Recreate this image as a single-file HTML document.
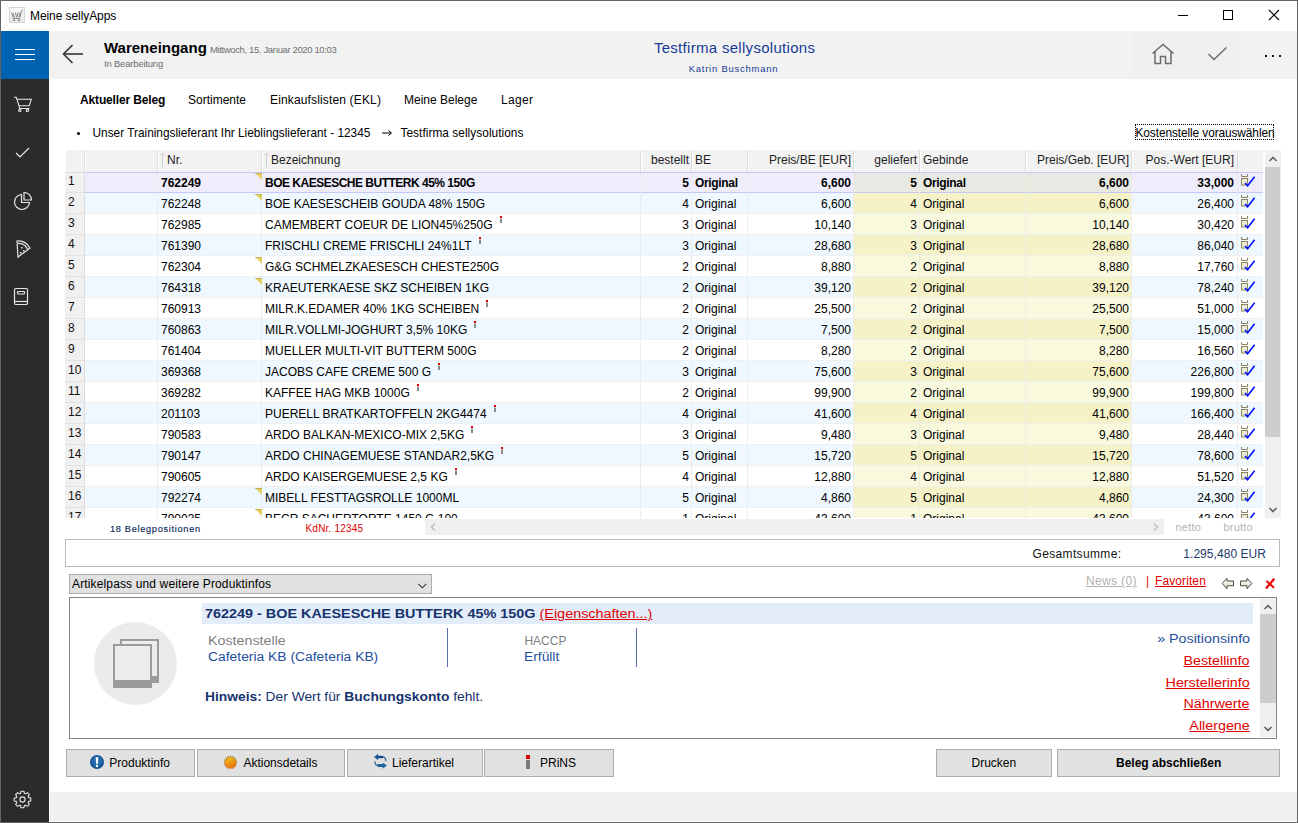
<!DOCTYPE html><html><head><meta charset="utf-8"><style>
html,body{margin:0;padding:0;width:1298px;height:823px;overflow:hidden;background:#fff;}
body{position:relative;font-family:"Liberation Sans", sans-serif;}
.a{position:absolute;}
.t{white-space:nowrap;}
</style></head><body>
<div class="a" style="left:9px;top:7px;width:16px;height:16px;background:linear-gradient(#fafafa,#e6e6e6);box-shadow:inset 0 0 0 1px #d4d4d4;"></div>
<svg class="a" style="left:9px;top:7px" width="16" height="16" viewBox="0 0 16 16"><g fill="none" stroke="#8a8a8a" stroke-width="1">
<path d="M2.5 5.5 L4.5 11.5 L10.5 11.5 L12.5 4 L14 2.5"/><path d="M4 6 L5.5 10.5 M6.5 5.5 L7.5 10 M9 5.5 L8 10.5 M11 5.5 L10 10"/>
<path d="M4 13.5 h2 M9 13.5 h2 M5 12 v2 M10 12 v2"/></g></svg>
<div class="a t" style="top:8.84px;font-size:12px;line-height:14px;color:#000;letter-spacing:-0.08px;left:30px;">Meine sellyApps</div>
<div class="a" style="left:1178px;top:15px;width:10px;height:1px;background:#000"></div>
<div class="a" style="left:1223px;top:10px;width:10px;height:10px;box-shadow:inset 0 0 0 1px #000"></div>
<svg class="a" style="left:1268px;top:9px" width="12" height="12" viewBox="0 0 12 12"><path d="M1 1 L11 11 M11 1 L1 11" stroke="#000" stroke-width="1.1"/></svg>
<div class="a" style="left:1px;top:31px;width:48px;height:791px;background:#2b2b2b;"></div>
<div class="a" style="left:1px;top:31px;width:48px;height:48px;background:#0063b1;"></div>
<div class="a" style="left:15px;top:49px;width:20px;height:1px;background:#fff"></div>
<div class="a" style="left:15px;top:54px;width:20px;height:1px;background:#fff"></div>
<div class="a" style="left:15px;top:59px;width:20px;height:1px;background:#fff"></div>
<div class="a" style="left:50px;top:31px;width:1247px;height:48px;background:#f2f2f2;"></div>
<div class="a" style="left:1132px;top:31px;width:110px;height:48px;background:#f0f0f0;"></div>
<svg class="a" style="left:60px;top:42px" width="26" height="24" viewBox="0 0 26 24"><g fill="none" stroke="#333" stroke-width="1.6"><path d="M3.5 12 H23"/><path d="M12.5 3 L3.5 12 L12.5 21"/></g></svg>
<div class="a t" style="top:39.30px;font-size:15px;line-height:17px;color:#000;font-weight:700;left:104px;">Wareneingang</div>
<div class="a t" style="top:44.21px;font-size:9.5px;line-height:11px;color:#707070;letter-spacing:-0.37px;left:210px;">Mittwoch, 15. Januar 2020 10:03</div>
<div class="a t" style="top:58.21px;font-size:9.5px;line-height:11px;color:#6e6e6e;letter-spacing:-0.2px;left:104px;">In Bearbeitung</div>
<div class="a t" style="top:39.30px;font-size:15px;line-height:17px;color:#173c96;letter-spacing:0.3px;left:434.6px;width:600px;text-align:center;">Testfirma sellysolutions</div>
<div class="a t" style="top:63.21px;font-size:9.5px;line-height:11px;color:#173c96;letter-spacing:0.75px;left:433.5px;width:600px;text-align:center;">Katrin Buschmann</div>
<svg class="a" style="left:1150px;top:42px" width="26" height="24" viewBox="0 0 26 24"><g fill="none" stroke="#6b6b6b" stroke-width="1.5" stroke-linejoin="miter">
<path d="M2.5 11.5 L13 2.5 L23.5 11.5"/><path d="M5 9.5 V21.5 H10.5 V14.5 H15.5 V21.5 H21 V9.5"/></g></svg>
<svg class="a" style="left:1206px;top:45px" width="24" height="18" viewBox="0 0 24 18"><path d="M2.5 9 L8 14.5 L20.5 2.5" fill="none" stroke="#6b6b6b" stroke-width="1.5"/></svg>
<div class="a" style="left:1265px;top:55px;width:2px;height:2px;background:#111"></div>
<div class="a" style="left:1272px;top:55px;width:2px;height:2px;background:#111"></div>
<div class="a" style="left:1279px;top:55px;width:2px;height:2px;background:#111"></div>
<svg class="a" style="left:12px;top:94px" width="22" height="20" viewBox="0 0 22 20"><g fill="none" stroke="#e6e6e6" stroke-width="1.1">
<path d="M2 3.2 H4.2 L7.8 14.5 H17.5"/><path d="M5 5.3 H19.3 L17.2 11.8 H6.9"/><circle cx="7.8" cy="16.6" r="1.2"/><circle cx="15.4" cy="16.6" r="1.2"/></g></svg>
<svg class="a" style="left:12px;top:144px" width="22" height="16" viewBox="0 0 22 16"><path d="M4 9 L8 13 L17 4" fill="none" stroke="#e6e6e6" stroke-width="1.2"/></svg>
<svg class="a" style="left:10.5px;top:190.5px" width="22" height="22" viewBox="0 0 22 22"><g fill="none" stroke="#e6e6e6" stroke-width="1.2">
<path d="M10.5 3.5 A7.5 7.5 0 1 0 18.5 11.5 H10.5 Z"/><path d="M13 1.5 V9 H20.5 A7.5 7.5 0 0 0 13 1.5 Z"/></g></svg>
<svg class="a" style="left:14px;top:238px" width="20" height="22" viewBox="0 0 20 22"><g fill="none" stroke="#e6e6e6" stroke-width="1.2">
<path d="M3 3 Q11 2 16 10 L4 19 Z"/><path d="M4 5.5 Q10 5 13.5 11"/></g><g fill="#e6e6e6"><rect x="7" y="9" width="1.5" height="1.5"/><rect x="9" y="12" width="1.5" height="1.5"/><rect x="6" y="14" width="1.5" height="1.5"/></g></svg>
<svg class="a" style="left:12px;top:286px" width="20" height="22" viewBox="0 0 20 22"><g fill="none" stroke="#e6e6e6" stroke-width="1.2">
<rect x="2.5" y="2.5" width="13" height="16" rx="1.2"/><path d="M2.5 15.5 H15.5"/><rect x="5.5" y="5.5" width="7" height="2.5" rx="0.8"/></g></svg>
<svg class="a" style="left:12px;top:789px" width="21" height="21" viewBox="0 0 21 21"><g fill="none" stroke="#e6e6e6" stroke-width="1.1" stroke-linejoin="round"><path d="M16.61 8.61 L18.78 9.08 L18.78 11.92 L16.61 12.39 L16.16 13.49 L17.36 15.35 L15.35 17.36 L13.49 16.16 L12.39 16.61 L11.92 18.78 L9.08 18.78 L8.61 16.61 L7.51 16.16 L5.65 17.36 L3.64 15.35 L4.84 13.49 L4.39 12.39 L2.22 11.92 L2.22 9.08 L4.39 8.61 L4.84 7.51 L3.64 5.65 L5.65 3.64 L7.51 4.84 L8.61 4.39 L9.08 2.22 L11.92 2.22 L12.39 4.39 L13.49 4.84 L15.35 3.64 L17.36 5.65 L16.16 7.51 Z"/><circle cx="10.5" cy="10.5" r="2.6"/></g></svg>
<div class="a t" style="top:92.84px;font-size:12px;line-height:14px;color:#000;font-weight:700;letter-spacing:-0.15px;left:80px;">Aktueller Beleg</div>
<div class="a t" style="top:92.84px;font-size:12px;line-height:14px;color:#000;left:188px;">Sortimente</div>
<div class="a t" style="top:92.84px;font-size:12px;line-height:14px;color:#000;letter-spacing:0.15px;left:270px;">Einkaufslisten (EKL)</div>
<div class="a t" style="top:92.84px;font-size:12px;line-height:14px;color:#000;left:404px;">Meine Belege</div>
<div class="a t" style="top:92.84px;font-size:12px;line-height:14px;color:#000;letter-spacing:0.3px;left:501px;">Lager</div>
<div class="a" style="left:77px;top:132px;width:3px;height:3px;border-radius:2px;background:#000"></div>
<div class="a t" style="top:125.89px;font-size:11.85px;line-height:14px;color:#000;left:92.5px;">Unser Trainingslieferant Ihr Lieblingslieferant - 12345</div>
<svg class="a" style="left:381px;top:128px" width="12" height="10" viewBox="0 0 12 10"><path d="M1 5 H10" stroke="#000" stroke-width="1"/><path d="M7.5 2.5 L10.5 5 L7.5 7.5" fill="none" stroke="#000" stroke-width="1"/></svg>
<div class="a t" style="top:125.89px;font-size:11.85px;line-height:14px;color:#000;letter-spacing:0.05px;left:400.5px;">Testfirma sellysolutions</div>
<div class="a" style="left:1135px;top:124px;width:137px;height:14px;border:1px dotted #000;"></div>
<div class="a t" style="top:125.88px;font-size:11.9px;line-height:14px;color:#000;letter-spacing:-0.1px;left:1135.5px;">Kostenstelle vorauswählen</div>
<div class="a" style="left:66px;top:150px;width:1197px;height:22px;background:#f2f2f2;"></div>
<div class="a" style="left:84px;top:150px;width:1px;height:22px;background:#dcdcdc;"></div>
<div class="a" style="left:85px;top:150px;width:1px;height:22px;background:#ffffff;"></div>
<div class="a" style="left:157px;top:150px;width:1px;height:22px;background:#dcdcdc;"></div>
<div class="a" style="left:158px;top:150px;width:1px;height:22px;background:#ffffff;"></div>
<div class="a" style="left:261px;top:150px;width:1px;height:22px;background:#dcdcdc;"></div>
<div class="a" style="left:262px;top:150px;width:1px;height:22px;background:#ffffff;"></div>
<div class="a" style="left:640px;top:150px;width:1px;height:22px;background:#dcdcdc;"></div>
<div class="a" style="left:641px;top:150px;width:1px;height:22px;background:#ffffff;"></div>
<div class="a" style="left:691px;top:150px;width:1px;height:22px;background:#dcdcdc;"></div>
<div class="a" style="left:692px;top:150px;width:1px;height:22px;background:#ffffff;"></div>
<div class="a" style="left:747px;top:150px;width:1px;height:22px;background:#dcdcdc;"></div>
<div class="a" style="left:748px;top:150px;width:1px;height:22px;background:#ffffff;"></div>
<div class="a" style="left:853px;top:150px;width:1px;height:22px;background:#dcdcdc;"></div>
<div class="a" style="left:854px;top:150px;width:1px;height:22px;background:#ffffff;"></div>
<div class="a" style="left:919px;top:150px;width:1px;height:22px;background:#dcdcdc;"></div>
<div class="a" style="left:920px;top:150px;width:1px;height:22px;background:#ffffff;"></div>
<div class="a" style="left:1025px;top:150px;width:1px;height:22px;background:#dcdcdc;"></div>
<div class="a" style="left:1026px;top:150px;width:1px;height:22px;background:#ffffff;"></div>
<div class="a" style="left:1131px;top:150px;width:1px;height:22px;background:#dcdcdc;"></div>
<div class="a" style="left:1132px;top:150px;width:1px;height:22px;background:#ffffff;"></div>
<div class="a" style="left:1237px;top:150px;width:1px;height:22px;background:#dcdcdc;"></div>
<div class="a" style="left:1238px;top:150px;width:1px;height:22px;background:#ffffff;"></div>
<svg class="a" style="left:160px;top:152px" width="5" height="17" viewBox="0 0 5 17"><path d="M2.5 1 V16 M0.5 3.5 L2.5 1 L4.5 3.5" fill="none" stroke="#d0d0d0" stroke-width="1"/></svg>
<svg class="a" style="left:264px;top:152px" width="5" height="17" viewBox="0 0 5 17"><path d="M2.5 1 V16 M0.5 3.5 L2.5 1 L4.5 3.5" fill="none" stroke="#d0d0d0" stroke-width="1"/></svg>
<div class="a t" style="top:152.84px;font-size:12px;line-height:14px;color:#222;left:167px;">Nr.</div>
<div class="a t" style="top:152.84px;font-size:12px;line-height:14px;color:#222;left:271px;">Bezeichnung</div>
<div class="a t" style="top:152.84px;font-size:12px;line-height:14px;color:#222;right:609px;text-align:right;">bestellt</div>
<div class="a t" style="top:152.84px;font-size:12px;line-height:14px;color:#222;left:695px;">BE</div>
<div class="a t" style="top:152.84px;font-size:12px;line-height:14px;color:#222;right:447px;text-align:right;">Preis/BE [EUR]</div>
<div class="a t" style="top:152.84px;font-size:12px;line-height:14px;color:#222;right:381px;text-align:right;">geliefert</div>
<div class="a t" style="top:152.84px;font-size:12px;line-height:14px;color:#222;left:923px;">Gebinde</div>
<div class="a t" style="top:152.84px;font-size:12px;line-height:14px;color:#222;right:169px;text-align:right;">Preis/Geb. [EUR]</div>
<div class="a t" style="top:152.84px;font-size:12px;line-height:14px;color:#222;right:64px;text-align:right;">Pos.-Wert [EUR]</div>
<div class="a" style="left:65px;top:172px;width:1198px;height:346px;overflow:hidden;">
<div class="a" style="left:20px;top:0px;width:1178px;height:21px;background:#efedfc"></div>
<div class="a" style="left:789px;top:0px;width:277px;height:21px;background:#e9e9e4"></div>
<div class="a" style="left:20px;top:0px;width:1178px;height:1px;background:#c8c8f8"></div>
<div class="a" style="left:20px;top:20px;width:1178px;height:1px;background:#c8c8f8"></div>
<div class="a" style="left:0px;top:0px;width:19px;height:20px;background:#f0f0f0"></div>
<div class="a" style="left:0px;top:20px;width:19px;height:1px;background:#e2e2e2"></div>
<div class="a" style="left:0px;top:0px;width:19px;height:1px;background:#dcdcdc"></div>
<div class="a" style="left:19px;top:0px;width:1px;height:21px;background:#dcdcdc"></div>
<div class="a" style="left:92px;top:1px;width:1px;height:20px;background:#ececec"></div>
<div class="a" style="left:196px;top:1px;width:1px;height:20px;background:#ececec"></div>
<div class="a" style="left:575px;top:1px;width:1px;height:20px;background:#ececec"></div>
<div class="a" style="left:626px;top:1px;width:1px;height:20px;background:#ececec"></div>
<div class="a" style="left:682px;top:1px;width:1px;height:20px;background:#ececec"></div>
<div class="a" style="left:788px;top:1px;width:1px;height:20px;background:#ececec"></div>
<div class="a" style="left:854px;top:1px;width:1px;height:20px;background:#efeedd"></div>
<div class="a" style="left:960px;top:1px;width:1px;height:20px;background:#efeedd"></div>
<div class="a" style="left:1066px;top:1px;width:1px;height:20px;background:#ececec"></div>
<div class="a" style="left:1172px;top:1px;width:1px;height:20px;background:#ececec"></div>
<div class="a t" style="top:2.34px;font-size:12px;line-height:14px;color:#111;left:3px;">1</div>
<div class="a t" style="top:3.84px;font-size:12px;line-height:14px;color:#000;font-weight:700;left:96px;">762249</div>
<div class="a t" style="top:3.84px;font-size:12px;line-height:14px;color:#000;font-weight:700;letter-spacing:-0.5px;left:200px;">BOE KAESESCHE BUTTERK 45% 150G</div>
<div class="a t" style="top:3.84px;font-size:12px;line-height:14px;color:#000;font-weight:700;left:324px;width:300px;text-align:right;">5</div>
<div class="a t" style="top:3.84px;font-size:12px;line-height:14px;color:#000;font-weight:700;letter-spacing:-0.33px;left:630px;">Original</div>
<div class="a t" style="top:3.84px;font-size:12px;line-height:14px;color:#000;font-weight:700;left:486px;width:300px;text-align:right;">6,600</div>
<div class="a t" style="top:3.84px;font-size:12px;line-height:14px;color:#000;font-weight:700;left:552px;width:300px;text-align:right;">5</div>
<div class="a t" style="top:3.84px;font-size:12px;line-height:14px;color:#000;font-weight:700;letter-spacing:-0.33px;left:858px;">Original</div>
<div class="a t" style="top:3.84px;font-size:12px;line-height:14px;color:#000;font-weight:700;left:764px;width:300px;text-align:right;">6,600</div>
<div class="a t" style="top:3.84px;font-size:12px;line-height:14px;color:#000;font-weight:700;left:869px;width:300px;text-align:right;">33,000</div>
<svg class="a" style="left:190px;top:1px" width="7" height="7" viewBox="0 0 7 7"><path d="M0 0 H7 V7 Z" fill="#e2cf62"/><path d="M0 0 H7" stroke="#a89540" stroke-width="1"/></svg>
<svg class="a" style="left:1175px;top:1px" width="17" height="15" viewBox="0 0 17 15"><g fill="none" stroke="#8a8560" stroke-width="1">
<path d="M1.5 1 V3.5 H7.5 V1"/><rect x="1.5" y="5.5" width="6" height="6.5" fill="#ecebd8"/></g>
<path d="M5 10 L7.6 12.8 L14.6 3.8" fill="none" stroke="#0010ff" stroke-width="1.6"/></svg>
<div class="a" style="left:20px;top:21px;width:1178px;height:20px;background:#eef8fe"></div>
<div class="a" style="left:789px;top:21px;width:277px;height:20px;background:#f5f2c8"></div>
<div class="a" style="left:20px;top:41px;width:1178px;height:1px;background:#f0f0f0"></div>
<div class="a" style="left:0px;top:21px;width:19px;height:20px;background:#f0f0f0"></div>
<div class="a" style="left:0px;top:41px;width:19px;height:1px;background:#e2e2e2"></div>
<div class="a" style="left:19px;top:21px;width:1px;height:21px;background:#dcdcdc"></div>
<div class="a" style="left:92px;top:21px;width:1px;height:20px;background:#ececec"></div>
<div class="a" style="left:196px;top:21px;width:1px;height:20px;background:#ececec"></div>
<div class="a" style="left:575px;top:21px;width:1px;height:20px;background:#ececec"></div>
<div class="a" style="left:626px;top:21px;width:1px;height:20px;background:#ececec"></div>
<div class="a" style="left:682px;top:21px;width:1px;height:20px;background:#ececec"></div>
<div class="a" style="left:788px;top:21px;width:1px;height:20px;background:#ececec"></div>
<div class="a" style="left:854px;top:21px;width:1px;height:20px;background:#efeedd"></div>
<div class="a" style="left:960px;top:21px;width:1px;height:20px;background:#efeedd"></div>
<div class="a" style="left:1066px;top:21px;width:1px;height:20px;background:#ececec"></div>
<div class="a" style="left:1172px;top:21px;width:1px;height:20px;background:#ececec"></div>
<div class="a t" style="top:23.34px;font-size:12px;line-height:14px;color:#111;left:3px;">2</div>
<div class="a t" style="top:24.84px;font-size:12px;line-height:14px;color:#000;left:96px;">762248</div>
<div class="a t" style="top:24.84px;font-size:12px;line-height:14px;color:#000;left:200px;">BOE KAESESCHEIB GOUDA 48% 150G</div>
<div class="a t" style="top:24.84px;font-size:12px;line-height:14px;color:#000;left:324px;width:300px;text-align:right;">4</div>
<div class="a t" style="top:24.84px;font-size:12px;line-height:14px;color:#000;left:630px;">Original</div>
<div class="a t" style="top:24.84px;font-size:12px;line-height:14px;color:#000;left:486px;width:300px;text-align:right;">6,600</div>
<div class="a t" style="top:24.84px;font-size:12px;line-height:14px;color:#000;left:552px;width:300px;text-align:right;">4</div>
<div class="a t" style="top:24.84px;font-size:12px;line-height:14px;color:#000;left:858px;">Original</div>
<div class="a t" style="top:24.84px;font-size:12px;line-height:14px;color:#000;left:764px;width:300px;text-align:right;">6,600</div>
<div class="a t" style="top:24.84px;font-size:12px;line-height:14px;color:#000;left:869px;width:300px;text-align:right;">26,400</div>
<svg class="a" style="left:190px;top:22px" width="7" height="7" viewBox="0 0 7 7"><path d="M0 0 H7 V7 Z" fill="#e2cf62"/><path d="M0 0 H7" stroke="#a89540" stroke-width="1"/></svg>
<svg class="a" style="left:1175px;top:22px" width="17" height="15" viewBox="0 0 17 15"><g fill="none" stroke="#8a8560" stroke-width="1">
<path d="M1.5 1 V3.5 H7.5 V1"/><rect x="1.5" y="5.5" width="6" height="6.5" fill="#ecebd8"/></g>
<path d="M5 10 L7.6 12.8 L14.6 3.8" fill="none" stroke="#0010ff" stroke-width="1.6"/></svg>
<div class="a" style="left:20px;top:42px;width:1178px;height:20px;background:#ffffff"></div>
<div class="a" style="left:789px;top:42px;width:277px;height:20px;background:#f9f9de"></div>
<div class="a" style="left:20px;top:62px;width:1178px;height:1px;background:#f0f0f0"></div>
<div class="a" style="left:0px;top:42px;width:19px;height:20px;background:#f0f0f0"></div>
<div class="a" style="left:0px;top:62px;width:19px;height:1px;background:#e2e2e2"></div>
<div class="a" style="left:19px;top:42px;width:1px;height:21px;background:#dcdcdc"></div>
<div class="a" style="left:92px;top:42px;width:1px;height:20px;background:#ececec"></div>
<div class="a" style="left:196px;top:42px;width:1px;height:20px;background:#ececec"></div>
<div class="a" style="left:575px;top:42px;width:1px;height:20px;background:#ececec"></div>
<div class="a" style="left:626px;top:42px;width:1px;height:20px;background:#ececec"></div>
<div class="a" style="left:682px;top:42px;width:1px;height:20px;background:#ececec"></div>
<div class="a" style="left:788px;top:42px;width:1px;height:20px;background:#ececec"></div>
<div class="a" style="left:854px;top:42px;width:1px;height:20px;background:#efeedd"></div>
<div class="a" style="left:960px;top:42px;width:1px;height:20px;background:#efeedd"></div>
<div class="a" style="left:1066px;top:42px;width:1px;height:20px;background:#ececec"></div>
<div class="a" style="left:1172px;top:42px;width:1px;height:20px;background:#ececec"></div>
<div class="a t" style="top:44.34px;font-size:12px;line-height:14px;color:#111;left:3px;">3</div>
<div class="a t" style="top:45.84px;font-size:12px;line-height:14px;color:#000;left:96px;">762985</div>
<div class="a t" style="top:45.84px;font-size:12px;line-height:14px;color:#000;left:200px;">CAMEMBERT COEUR DE LION45%250G<span style="position:absolute;top:-1.84px;width:2px;height:7px;margin-left:7px;background:linear-gradient(#e00000 0,#e00000 2px,#c8c8c8 2px,#c8c8c8 3px,#8a8a8a 3px)"></span></div>
<div class="a t" style="top:45.84px;font-size:12px;line-height:14px;color:#000;left:324px;width:300px;text-align:right;">3</div>
<div class="a t" style="top:45.84px;font-size:12px;line-height:14px;color:#000;left:630px;">Original</div>
<div class="a t" style="top:45.84px;font-size:12px;line-height:14px;color:#000;left:486px;width:300px;text-align:right;">10,140</div>
<div class="a t" style="top:45.84px;font-size:12px;line-height:14px;color:#000;left:552px;width:300px;text-align:right;">3</div>
<div class="a t" style="top:45.84px;font-size:12px;line-height:14px;color:#000;left:858px;">Original</div>
<div class="a t" style="top:45.84px;font-size:12px;line-height:14px;color:#000;left:764px;width:300px;text-align:right;">10,140</div>
<div class="a t" style="top:45.84px;font-size:12px;line-height:14px;color:#000;left:869px;width:300px;text-align:right;">30,420</div>
<svg class="a" style="left:1175px;top:43px" width="17" height="15" viewBox="0 0 17 15"><g fill="none" stroke="#8a8560" stroke-width="1">
<path d="M1.5 1 V3.5 H7.5 V1"/><rect x="1.5" y="5.5" width="6" height="6.5" fill="#ecebd8"/></g>
<path d="M5 10 L7.6 12.8 L14.6 3.8" fill="none" stroke="#0010ff" stroke-width="1.6"/></svg>
<div class="a" style="left:20px;top:63px;width:1178px;height:20px;background:#eef8fe"></div>
<div class="a" style="left:789px;top:63px;width:277px;height:20px;background:#f5f2c8"></div>
<div class="a" style="left:20px;top:83px;width:1178px;height:1px;background:#f0f0f0"></div>
<div class="a" style="left:0px;top:63px;width:19px;height:20px;background:#f0f0f0"></div>
<div class="a" style="left:0px;top:83px;width:19px;height:1px;background:#e2e2e2"></div>
<div class="a" style="left:19px;top:63px;width:1px;height:21px;background:#dcdcdc"></div>
<div class="a" style="left:92px;top:63px;width:1px;height:20px;background:#ececec"></div>
<div class="a" style="left:196px;top:63px;width:1px;height:20px;background:#ececec"></div>
<div class="a" style="left:575px;top:63px;width:1px;height:20px;background:#ececec"></div>
<div class="a" style="left:626px;top:63px;width:1px;height:20px;background:#ececec"></div>
<div class="a" style="left:682px;top:63px;width:1px;height:20px;background:#ececec"></div>
<div class="a" style="left:788px;top:63px;width:1px;height:20px;background:#ececec"></div>
<div class="a" style="left:854px;top:63px;width:1px;height:20px;background:#efeedd"></div>
<div class="a" style="left:960px;top:63px;width:1px;height:20px;background:#efeedd"></div>
<div class="a" style="left:1066px;top:63px;width:1px;height:20px;background:#ececec"></div>
<div class="a" style="left:1172px;top:63px;width:1px;height:20px;background:#ececec"></div>
<div class="a t" style="top:65.34px;font-size:12px;line-height:14px;color:#111;left:3px;">4</div>
<div class="a t" style="top:66.84px;font-size:12px;line-height:14px;color:#000;left:96px;">761390</div>
<div class="a t" style="top:66.84px;font-size:12px;line-height:14px;color:#000;left:200px;">FRISCHLI CREME FRISCHLI 24%1LT<span style="position:absolute;top:-1.84px;width:2px;height:7px;margin-left:7px;background:linear-gradient(#e00000 0,#e00000 2px,#c8c8c8 2px,#c8c8c8 3px,#8a8a8a 3px)"></span></div>
<div class="a t" style="top:66.84px;font-size:12px;line-height:14px;color:#000;left:324px;width:300px;text-align:right;">3</div>
<div class="a t" style="top:66.84px;font-size:12px;line-height:14px;color:#000;left:630px;">Original</div>
<div class="a t" style="top:66.84px;font-size:12px;line-height:14px;color:#000;left:486px;width:300px;text-align:right;">28,680</div>
<div class="a t" style="top:66.84px;font-size:12px;line-height:14px;color:#000;left:552px;width:300px;text-align:right;">3</div>
<div class="a t" style="top:66.84px;font-size:12px;line-height:14px;color:#000;left:858px;">Original</div>
<div class="a t" style="top:66.84px;font-size:12px;line-height:14px;color:#000;left:764px;width:300px;text-align:right;">28,680</div>
<div class="a t" style="top:66.84px;font-size:12px;line-height:14px;color:#000;left:869px;width:300px;text-align:right;">86,040</div>
<svg class="a" style="left:1175px;top:64px" width="17" height="15" viewBox="0 0 17 15"><g fill="none" stroke="#8a8560" stroke-width="1">
<path d="M1.5 1 V3.5 H7.5 V1"/><rect x="1.5" y="5.5" width="6" height="6.5" fill="#ecebd8"/></g>
<path d="M5 10 L7.6 12.8 L14.6 3.8" fill="none" stroke="#0010ff" stroke-width="1.6"/></svg>
<div class="a" style="left:20px;top:84px;width:1178px;height:20px;background:#ffffff"></div>
<div class="a" style="left:789px;top:84px;width:277px;height:20px;background:#f9f9de"></div>
<div class="a" style="left:20px;top:104px;width:1178px;height:1px;background:#f0f0f0"></div>
<div class="a" style="left:0px;top:84px;width:19px;height:20px;background:#f0f0f0"></div>
<div class="a" style="left:0px;top:104px;width:19px;height:1px;background:#e2e2e2"></div>
<div class="a" style="left:19px;top:84px;width:1px;height:21px;background:#dcdcdc"></div>
<div class="a" style="left:92px;top:84px;width:1px;height:20px;background:#ececec"></div>
<div class="a" style="left:196px;top:84px;width:1px;height:20px;background:#ececec"></div>
<div class="a" style="left:575px;top:84px;width:1px;height:20px;background:#ececec"></div>
<div class="a" style="left:626px;top:84px;width:1px;height:20px;background:#ececec"></div>
<div class="a" style="left:682px;top:84px;width:1px;height:20px;background:#ececec"></div>
<div class="a" style="left:788px;top:84px;width:1px;height:20px;background:#ececec"></div>
<div class="a" style="left:854px;top:84px;width:1px;height:20px;background:#efeedd"></div>
<div class="a" style="left:960px;top:84px;width:1px;height:20px;background:#efeedd"></div>
<div class="a" style="left:1066px;top:84px;width:1px;height:20px;background:#ececec"></div>
<div class="a" style="left:1172px;top:84px;width:1px;height:20px;background:#ececec"></div>
<div class="a t" style="top:86.34px;font-size:12px;line-height:14px;color:#111;left:3px;">5</div>
<div class="a t" style="top:87.84px;font-size:12px;line-height:14px;color:#000;left:96px;">762304</div>
<div class="a t" style="top:87.84px;font-size:12px;line-height:14px;color:#000;left:200px;">G&amp;G SCHMELZKAESESCH CHESTE250G</div>
<div class="a t" style="top:87.84px;font-size:12px;line-height:14px;color:#000;left:324px;width:300px;text-align:right;">2</div>
<div class="a t" style="top:87.84px;font-size:12px;line-height:14px;color:#000;left:630px;">Original</div>
<div class="a t" style="top:87.84px;font-size:12px;line-height:14px;color:#000;left:486px;width:300px;text-align:right;">8,880</div>
<div class="a t" style="top:87.84px;font-size:12px;line-height:14px;color:#000;left:552px;width:300px;text-align:right;">2</div>
<div class="a t" style="top:87.84px;font-size:12px;line-height:14px;color:#000;left:858px;">Original</div>
<div class="a t" style="top:87.84px;font-size:12px;line-height:14px;color:#000;left:764px;width:300px;text-align:right;">8,880</div>
<div class="a t" style="top:87.84px;font-size:12px;line-height:14px;color:#000;left:869px;width:300px;text-align:right;">17,760</div>
<svg class="a" style="left:190px;top:85px" width="7" height="7" viewBox="0 0 7 7"><path d="M0 0 H7 V7 Z" fill="#e2cf62"/><path d="M0 0 H7" stroke="#a89540" stroke-width="1"/></svg>
<svg class="a" style="left:1175px;top:85px" width="17" height="15" viewBox="0 0 17 15"><g fill="none" stroke="#8a8560" stroke-width="1">
<path d="M1.5 1 V3.5 H7.5 V1"/><rect x="1.5" y="5.5" width="6" height="6.5" fill="#ecebd8"/></g>
<path d="M5 10 L7.6 12.8 L14.6 3.8" fill="none" stroke="#0010ff" stroke-width="1.6"/></svg>
<div class="a" style="left:20px;top:105px;width:1178px;height:20px;background:#eef8fe"></div>
<div class="a" style="left:789px;top:105px;width:277px;height:20px;background:#f5f2c8"></div>
<div class="a" style="left:20px;top:125px;width:1178px;height:1px;background:#f0f0f0"></div>
<div class="a" style="left:0px;top:105px;width:19px;height:20px;background:#f0f0f0"></div>
<div class="a" style="left:0px;top:125px;width:19px;height:1px;background:#e2e2e2"></div>
<div class="a" style="left:19px;top:105px;width:1px;height:21px;background:#dcdcdc"></div>
<div class="a" style="left:92px;top:105px;width:1px;height:20px;background:#ececec"></div>
<div class="a" style="left:196px;top:105px;width:1px;height:20px;background:#ececec"></div>
<div class="a" style="left:575px;top:105px;width:1px;height:20px;background:#ececec"></div>
<div class="a" style="left:626px;top:105px;width:1px;height:20px;background:#ececec"></div>
<div class="a" style="left:682px;top:105px;width:1px;height:20px;background:#ececec"></div>
<div class="a" style="left:788px;top:105px;width:1px;height:20px;background:#ececec"></div>
<div class="a" style="left:854px;top:105px;width:1px;height:20px;background:#efeedd"></div>
<div class="a" style="left:960px;top:105px;width:1px;height:20px;background:#efeedd"></div>
<div class="a" style="left:1066px;top:105px;width:1px;height:20px;background:#ececec"></div>
<div class="a" style="left:1172px;top:105px;width:1px;height:20px;background:#ececec"></div>
<div class="a t" style="top:107.34px;font-size:12px;line-height:14px;color:#111;left:3px;">6</div>
<div class="a t" style="top:108.84px;font-size:12px;line-height:14px;color:#000;left:96px;">764318</div>
<div class="a t" style="top:108.84px;font-size:12px;line-height:14px;color:#000;left:200px;">KRAEUTERKAESE SKZ SCHEIBEN 1KG</div>
<div class="a t" style="top:108.84px;font-size:12px;line-height:14px;color:#000;left:324px;width:300px;text-align:right;">2</div>
<div class="a t" style="top:108.84px;font-size:12px;line-height:14px;color:#000;left:630px;">Original</div>
<div class="a t" style="top:108.84px;font-size:12px;line-height:14px;color:#000;left:486px;width:300px;text-align:right;">39,120</div>
<div class="a t" style="top:108.84px;font-size:12px;line-height:14px;color:#000;left:552px;width:300px;text-align:right;">2</div>
<div class="a t" style="top:108.84px;font-size:12px;line-height:14px;color:#000;left:858px;">Original</div>
<div class="a t" style="top:108.84px;font-size:12px;line-height:14px;color:#000;left:764px;width:300px;text-align:right;">39,120</div>
<div class="a t" style="top:108.84px;font-size:12px;line-height:14px;color:#000;left:869px;width:300px;text-align:right;">78,240</div>
<svg class="a" style="left:190px;top:106px" width="7" height="7" viewBox="0 0 7 7"><path d="M0 0 H7 V7 Z" fill="#e2cf62"/><path d="M0 0 H7" stroke="#a89540" stroke-width="1"/></svg>
<svg class="a" style="left:1175px;top:106px" width="17" height="15" viewBox="0 0 17 15"><g fill="none" stroke="#8a8560" stroke-width="1">
<path d="M1.5 1 V3.5 H7.5 V1"/><rect x="1.5" y="5.5" width="6" height="6.5" fill="#ecebd8"/></g>
<path d="M5 10 L7.6 12.8 L14.6 3.8" fill="none" stroke="#0010ff" stroke-width="1.6"/></svg>
<div class="a" style="left:20px;top:126px;width:1178px;height:20px;background:#ffffff"></div>
<div class="a" style="left:789px;top:126px;width:277px;height:20px;background:#f9f9de"></div>
<div class="a" style="left:20px;top:146px;width:1178px;height:1px;background:#f0f0f0"></div>
<div class="a" style="left:0px;top:126px;width:19px;height:20px;background:#f0f0f0"></div>
<div class="a" style="left:0px;top:146px;width:19px;height:1px;background:#e2e2e2"></div>
<div class="a" style="left:19px;top:126px;width:1px;height:21px;background:#dcdcdc"></div>
<div class="a" style="left:92px;top:126px;width:1px;height:20px;background:#ececec"></div>
<div class="a" style="left:196px;top:126px;width:1px;height:20px;background:#ececec"></div>
<div class="a" style="left:575px;top:126px;width:1px;height:20px;background:#ececec"></div>
<div class="a" style="left:626px;top:126px;width:1px;height:20px;background:#ececec"></div>
<div class="a" style="left:682px;top:126px;width:1px;height:20px;background:#ececec"></div>
<div class="a" style="left:788px;top:126px;width:1px;height:20px;background:#ececec"></div>
<div class="a" style="left:854px;top:126px;width:1px;height:20px;background:#efeedd"></div>
<div class="a" style="left:960px;top:126px;width:1px;height:20px;background:#efeedd"></div>
<div class="a" style="left:1066px;top:126px;width:1px;height:20px;background:#ececec"></div>
<div class="a" style="left:1172px;top:126px;width:1px;height:20px;background:#ececec"></div>
<div class="a t" style="top:128.34px;font-size:12px;line-height:14px;color:#111;left:3px;">7</div>
<div class="a t" style="top:129.84px;font-size:12px;line-height:14px;color:#000;left:96px;">760913</div>
<div class="a t" style="top:129.84px;font-size:12px;line-height:14px;color:#000;left:200px;">MILR.K.EDAMER 40% 1KG SCHEIBEN<span style="position:absolute;top:-1.84px;width:2px;height:7px;margin-left:7px;background:linear-gradient(#e00000 0,#e00000 2px,#c8c8c8 2px,#c8c8c8 3px,#8a8a8a 3px)"></span></div>
<div class="a t" style="top:129.84px;font-size:12px;line-height:14px;color:#000;left:324px;width:300px;text-align:right;">2</div>
<div class="a t" style="top:129.84px;font-size:12px;line-height:14px;color:#000;left:630px;">Original</div>
<div class="a t" style="top:129.84px;font-size:12px;line-height:14px;color:#000;left:486px;width:300px;text-align:right;">25,500</div>
<div class="a t" style="top:129.84px;font-size:12px;line-height:14px;color:#000;left:552px;width:300px;text-align:right;">2</div>
<div class="a t" style="top:129.84px;font-size:12px;line-height:14px;color:#000;left:858px;">Original</div>
<div class="a t" style="top:129.84px;font-size:12px;line-height:14px;color:#000;left:764px;width:300px;text-align:right;">25,500</div>
<div class="a t" style="top:129.84px;font-size:12px;line-height:14px;color:#000;left:869px;width:300px;text-align:right;">51,000</div>
<svg class="a" style="left:1175px;top:127px" width="17" height="15" viewBox="0 0 17 15"><g fill="none" stroke="#8a8560" stroke-width="1">
<path d="M1.5 1 V3.5 H7.5 V1"/><rect x="1.5" y="5.5" width="6" height="6.5" fill="#ecebd8"/></g>
<path d="M5 10 L7.6 12.8 L14.6 3.8" fill="none" stroke="#0010ff" stroke-width="1.6"/></svg>
<div class="a" style="left:20px;top:147px;width:1178px;height:20px;background:#eef8fe"></div>
<div class="a" style="left:789px;top:147px;width:277px;height:20px;background:#f5f2c8"></div>
<div class="a" style="left:20px;top:167px;width:1178px;height:1px;background:#f0f0f0"></div>
<div class="a" style="left:0px;top:147px;width:19px;height:20px;background:#f0f0f0"></div>
<div class="a" style="left:0px;top:167px;width:19px;height:1px;background:#e2e2e2"></div>
<div class="a" style="left:19px;top:147px;width:1px;height:21px;background:#dcdcdc"></div>
<div class="a" style="left:92px;top:147px;width:1px;height:20px;background:#ececec"></div>
<div class="a" style="left:196px;top:147px;width:1px;height:20px;background:#ececec"></div>
<div class="a" style="left:575px;top:147px;width:1px;height:20px;background:#ececec"></div>
<div class="a" style="left:626px;top:147px;width:1px;height:20px;background:#ececec"></div>
<div class="a" style="left:682px;top:147px;width:1px;height:20px;background:#ececec"></div>
<div class="a" style="left:788px;top:147px;width:1px;height:20px;background:#ececec"></div>
<div class="a" style="left:854px;top:147px;width:1px;height:20px;background:#efeedd"></div>
<div class="a" style="left:960px;top:147px;width:1px;height:20px;background:#efeedd"></div>
<div class="a" style="left:1066px;top:147px;width:1px;height:20px;background:#ececec"></div>
<div class="a" style="left:1172px;top:147px;width:1px;height:20px;background:#ececec"></div>
<div class="a t" style="top:149.34px;font-size:12px;line-height:14px;color:#111;left:3px;">8</div>
<div class="a t" style="top:150.84px;font-size:12px;line-height:14px;color:#000;left:96px;">760863</div>
<div class="a t" style="top:150.84px;font-size:12px;line-height:14px;color:#000;left:200px;">MILR.VOLLMI-JOGHURT 3,5% 10KG<span style="position:absolute;top:-1.84px;width:2px;height:7px;margin-left:7px;background:linear-gradient(#e00000 0,#e00000 2px,#c8c8c8 2px,#c8c8c8 3px,#8a8a8a 3px)"></span></div>
<div class="a t" style="top:150.84px;font-size:12px;line-height:14px;color:#000;left:324px;width:300px;text-align:right;">2</div>
<div class="a t" style="top:150.84px;font-size:12px;line-height:14px;color:#000;left:630px;">Original</div>
<div class="a t" style="top:150.84px;font-size:12px;line-height:14px;color:#000;left:486px;width:300px;text-align:right;">7,500</div>
<div class="a t" style="top:150.84px;font-size:12px;line-height:14px;color:#000;left:552px;width:300px;text-align:right;">2</div>
<div class="a t" style="top:150.84px;font-size:12px;line-height:14px;color:#000;left:858px;">Original</div>
<div class="a t" style="top:150.84px;font-size:12px;line-height:14px;color:#000;left:764px;width:300px;text-align:right;">7,500</div>
<div class="a t" style="top:150.84px;font-size:12px;line-height:14px;color:#000;left:869px;width:300px;text-align:right;">15,000</div>
<svg class="a" style="left:1175px;top:148px" width="17" height="15" viewBox="0 0 17 15"><g fill="none" stroke="#8a8560" stroke-width="1">
<path d="M1.5 1 V3.5 H7.5 V1"/><rect x="1.5" y="5.5" width="6" height="6.5" fill="#ecebd8"/></g>
<path d="M5 10 L7.6 12.8 L14.6 3.8" fill="none" stroke="#0010ff" stroke-width="1.6"/></svg>
<div class="a" style="left:20px;top:168px;width:1178px;height:20px;background:#ffffff"></div>
<div class="a" style="left:789px;top:168px;width:277px;height:20px;background:#f9f9de"></div>
<div class="a" style="left:20px;top:188px;width:1178px;height:1px;background:#f0f0f0"></div>
<div class="a" style="left:0px;top:168px;width:19px;height:20px;background:#f0f0f0"></div>
<div class="a" style="left:0px;top:188px;width:19px;height:1px;background:#e2e2e2"></div>
<div class="a" style="left:19px;top:168px;width:1px;height:21px;background:#dcdcdc"></div>
<div class="a" style="left:92px;top:168px;width:1px;height:20px;background:#ececec"></div>
<div class="a" style="left:196px;top:168px;width:1px;height:20px;background:#ececec"></div>
<div class="a" style="left:575px;top:168px;width:1px;height:20px;background:#ececec"></div>
<div class="a" style="left:626px;top:168px;width:1px;height:20px;background:#ececec"></div>
<div class="a" style="left:682px;top:168px;width:1px;height:20px;background:#ececec"></div>
<div class="a" style="left:788px;top:168px;width:1px;height:20px;background:#ececec"></div>
<div class="a" style="left:854px;top:168px;width:1px;height:20px;background:#efeedd"></div>
<div class="a" style="left:960px;top:168px;width:1px;height:20px;background:#efeedd"></div>
<div class="a" style="left:1066px;top:168px;width:1px;height:20px;background:#ececec"></div>
<div class="a" style="left:1172px;top:168px;width:1px;height:20px;background:#ececec"></div>
<div class="a t" style="top:170.34px;font-size:12px;line-height:14px;color:#111;left:3px;">9</div>
<div class="a t" style="top:171.84px;font-size:12px;line-height:14px;color:#000;left:96px;">761404</div>
<div class="a t" style="top:171.84px;font-size:12px;line-height:14px;color:#000;left:200px;">MUELLER MULTI-VIT BUTTERM 500G</div>
<div class="a t" style="top:171.84px;font-size:12px;line-height:14px;color:#000;left:324px;width:300px;text-align:right;">2</div>
<div class="a t" style="top:171.84px;font-size:12px;line-height:14px;color:#000;left:630px;">Original</div>
<div class="a t" style="top:171.84px;font-size:12px;line-height:14px;color:#000;left:486px;width:300px;text-align:right;">8,280</div>
<div class="a t" style="top:171.84px;font-size:12px;line-height:14px;color:#000;left:552px;width:300px;text-align:right;">2</div>
<div class="a t" style="top:171.84px;font-size:12px;line-height:14px;color:#000;left:858px;">Original</div>
<div class="a t" style="top:171.84px;font-size:12px;line-height:14px;color:#000;left:764px;width:300px;text-align:right;">8,280</div>
<div class="a t" style="top:171.84px;font-size:12px;line-height:14px;color:#000;left:869px;width:300px;text-align:right;">16,560</div>
<svg class="a" style="left:1175px;top:169px" width="17" height="15" viewBox="0 0 17 15"><g fill="none" stroke="#8a8560" stroke-width="1">
<path d="M1.5 1 V3.5 H7.5 V1"/><rect x="1.5" y="5.5" width="6" height="6.5" fill="#ecebd8"/></g>
<path d="M5 10 L7.6 12.8 L14.6 3.8" fill="none" stroke="#0010ff" stroke-width="1.6"/></svg>
<div class="a" style="left:20px;top:189px;width:1178px;height:20px;background:#eef8fe"></div>
<div class="a" style="left:789px;top:189px;width:277px;height:20px;background:#f5f2c8"></div>
<div class="a" style="left:20px;top:209px;width:1178px;height:1px;background:#f0f0f0"></div>
<div class="a" style="left:0px;top:189px;width:19px;height:20px;background:#f0f0f0"></div>
<div class="a" style="left:0px;top:209px;width:19px;height:1px;background:#e2e2e2"></div>
<div class="a" style="left:19px;top:189px;width:1px;height:21px;background:#dcdcdc"></div>
<div class="a" style="left:92px;top:189px;width:1px;height:20px;background:#ececec"></div>
<div class="a" style="left:196px;top:189px;width:1px;height:20px;background:#ececec"></div>
<div class="a" style="left:575px;top:189px;width:1px;height:20px;background:#ececec"></div>
<div class="a" style="left:626px;top:189px;width:1px;height:20px;background:#ececec"></div>
<div class="a" style="left:682px;top:189px;width:1px;height:20px;background:#ececec"></div>
<div class="a" style="left:788px;top:189px;width:1px;height:20px;background:#ececec"></div>
<div class="a" style="left:854px;top:189px;width:1px;height:20px;background:#efeedd"></div>
<div class="a" style="left:960px;top:189px;width:1px;height:20px;background:#efeedd"></div>
<div class="a" style="left:1066px;top:189px;width:1px;height:20px;background:#ececec"></div>
<div class="a" style="left:1172px;top:189px;width:1px;height:20px;background:#ececec"></div>
<div class="a t" style="top:191.34px;font-size:12px;line-height:14px;color:#111;left:3px;">10</div>
<div class="a t" style="top:192.84px;font-size:12px;line-height:14px;color:#000;left:96px;">369368</div>
<div class="a t" style="top:192.84px;font-size:12px;line-height:14px;color:#000;left:200px;">JACOBS CAFE CREME 500 G<span style="position:absolute;top:-1.84px;width:2px;height:7px;margin-left:7px;background:linear-gradient(#e00000 0,#e00000 2px,#c8c8c8 2px,#c8c8c8 3px,#8a8a8a 3px)"></span></div>
<div class="a t" style="top:192.84px;font-size:12px;line-height:14px;color:#000;left:324px;width:300px;text-align:right;">3</div>
<div class="a t" style="top:192.84px;font-size:12px;line-height:14px;color:#000;left:630px;">Original</div>
<div class="a t" style="top:192.84px;font-size:12px;line-height:14px;color:#000;left:486px;width:300px;text-align:right;">75,600</div>
<div class="a t" style="top:192.84px;font-size:12px;line-height:14px;color:#000;left:552px;width:300px;text-align:right;">3</div>
<div class="a t" style="top:192.84px;font-size:12px;line-height:14px;color:#000;left:858px;">Original</div>
<div class="a t" style="top:192.84px;font-size:12px;line-height:14px;color:#000;left:764px;width:300px;text-align:right;">75,600</div>
<div class="a t" style="top:192.84px;font-size:12px;line-height:14px;color:#000;left:869px;width:300px;text-align:right;">226,800</div>
<svg class="a" style="left:1175px;top:190px" width="17" height="15" viewBox="0 0 17 15"><g fill="none" stroke="#8a8560" stroke-width="1">
<path d="M1.5 1 V3.5 H7.5 V1"/><rect x="1.5" y="5.5" width="6" height="6.5" fill="#ecebd8"/></g>
<path d="M5 10 L7.6 12.8 L14.6 3.8" fill="none" stroke="#0010ff" stroke-width="1.6"/></svg>
<div class="a" style="left:20px;top:210px;width:1178px;height:20px;background:#ffffff"></div>
<div class="a" style="left:789px;top:210px;width:277px;height:20px;background:#f9f9de"></div>
<div class="a" style="left:20px;top:230px;width:1178px;height:1px;background:#f0f0f0"></div>
<div class="a" style="left:0px;top:210px;width:19px;height:20px;background:#f0f0f0"></div>
<div class="a" style="left:0px;top:230px;width:19px;height:1px;background:#e2e2e2"></div>
<div class="a" style="left:19px;top:210px;width:1px;height:21px;background:#dcdcdc"></div>
<div class="a" style="left:92px;top:210px;width:1px;height:20px;background:#ececec"></div>
<div class="a" style="left:196px;top:210px;width:1px;height:20px;background:#ececec"></div>
<div class="a" style="left:575px;top:210px;width:1px;height:20px;background:#ececec"></div>
<div class="a" style="left:626px;top:210px;width:1px;height:20px;background:#ececec"></div>
<div class="a" style="left:682px;top:210px;width:1px;height:20px;background:#ececec"></div>
<div class="a" style="left:788px;top:210px;width:1px;height:20px;background:#ececec"></div>
<div class="a" style="left:854px;top:210px;width:1px;height:20px;background:#efeedd"></div>
<div class="a" style="left:960px;top:210px;width:1px;height:20px;background:#efeedd"></div>
<div class="a" style="left:1066px;top:210px;width:1px;height:20px;background:#ececec"></div>
<div class="a" style="left:1172px;top:210px;width:1px;height:20px;background:#ececec"></div>
<div class="a t" style="top:212.34px;font-size:12px;line-height:14px;color:#111;left:3px;">11</div>
<div class="a t" style="top:213.84px;font-size:12px;line-height:14px;color:#000;left:96px;">369282</div>
<div class="a t" style="top:213.84px;font-size:12px;line-height:14px;color:#000;left:200px;">KAFFEE HAG MKB 1000G<span style="position:absolute;top:-1.84px;width:2px;height:7px;margin-left:7px;background:linear-gradient(#e00000 0,#e00000 2px,#c8c8c8 2px,#c8c8c8 3px,#8a8a8a 3px)"></span></div>
<div class="a t" style="top:213.84px;font-size:12px;line-height:14px;color:#000;left:324px;width:300px;text-align:right;">2</div>
<div class="a t" style="top:213.84px;font-size:12px;line-height:14px;color:#000;left:630px;">Original</div>
<div class="a t" style="top:213.84px;font-size:12px;line-height:14px;color:#000;left:486px;width:300px;text-align:right;">99,900</div>
<div class="a t" style="top:213.84px;font-size:12px;line-height:14px;color:#000;left:552px;width:300px;text-align:right;">2</div>
<div class="a t" style="top:213.84px;font-size:12px;line-height:14px;color:#000;left:858px;">Original</div>
<div class="a t" style="top:213.84px;font-size:12px;line-height:14px;color:#000;left:764px;width:300px;text-align:right;">99,900</div>
<div class="a t" style="top:213.84px;font-size:12px;line-height:14px;color:#000;left:869px;width:300px;text-align:right;">199,800</div>
<svg class="a" style="left:1175px;top:211px" width="17" height="15" viewBox="0 0 17 15"><g fill="none" stroke="#8a8560" stroke-width="1">
<path d="M1.5 1 V3.5 H7.5 V1"/><rect x="1.5" y="5.5" width="6" height="6.5" fill="#ecebd8"/></g>
<path d="M5 10 L7.6 12.8 L14.6 3.8" fill="none" stroke="#0010ff" stroke-width="1.6"/></svg>
<div class="a" style="left:20px;top:231px;width:1178px;height:20px;background:#eef8fe"></div>
<div class="a" style="left:789px;top:231px;width:277px;height:20px;background:#f5f2c8"></div>
<div class="a" style="left:20px;top:251px;width:1178px;height:1px;background:#f0f0f0"></div>
<div class="a" style="left:0px;top:231px;width:19px;height:20px;background:#f0f0f0"></div>
<div class="a" style="left:0px;top:251px;width:19px;height:1px;background:#e2e2e2"></div>
<div class="a" style="left:19px;top:231px;width:1px;height:21px;background:#dcdcdc"></div>
<div class="a" style="left:92px;top:231px;width:1px;height:20px;background:#ececec"></div>
<div class="a" style="left:196px;top:231px;width:1px;height:20px;background:#ececec"></div>
<div class="a" style="left:575px;top:231px;width:1px;height:20px;background:#ececec"></div>
<div class="a" style="left:626px;top:231px;width:1px;height:20px;background:#ececec"></div>
<div class="a" style="left:682px;top:231px;width:1px;height:20px;background:#ececec"></div>
<div class="a" style="left:788px;top:231px;width:1px;height:20px;background:#ececec"></div>
<div class="a" style="left:854px;top:231px;width:1px;height:20px;background:#efeedd"></div>
<div class="a" style="left:960px;top:231px;width:1px;height:20px;background:#efeedd"></div>
<div class="a" style="left:1066px;top:231px;width:1px;height:20px;background:#ececec"></div>
<div class="a" style="left:1172px;top:231px;width:1px;height:20px;background:#ececec"></div>
<div class="a t" style="top:233.34px;font-size:12px;line-height:14px;color:#111;left:3px;">12</div>
<div class="a t" style="top:234.84px;font-size:12px;line-height:14px;color:#000;left:96px;">201103</div>
<div class="a t" style="top:234.84px;font-size:12px;line-height:14px;color:#000;left:200px;">PUERELL BRATKARTOFFELN 2KG4474<span style="position:absolute;top:-1.84px;width:2px;height:7px;margin-left:7px;background:linear-gradient(#e00000 0,#e00000 2px,#c8c8c8 2px,#c8c8c8 3px,#8a8a8a 3px)"></span></div>
<div class="a t" style="top:234.84px;font-size:12px;line-height:14px;color:#000;left:324px;width:300px;text-align:right;">4</div>
<div class="a t" style="top:234.84px;font-size:12px;line-height:14px;color:#000;left:630px;">Original</div>
<div class="a t" style="top:234.84px;font-size:12px;line-height:14px;color:#000;left:486px;width:300px;text-align:right;">41,600</div>
<div class="a t" style="top:234.84px;font-size:12px;line-height:14px;color:#000;left:552px;width:300px;text-align:right;">4</div>
<div class="a t" style="top:234.84px;font-size:12px;line-height:14px;color:#000;left:858px;">Original</div>
<div class="a t" style="top:234.84px;font-size:12px;line-height:14px;color:#000;left:764px;width:300px;text-align:right;">41,600</div>
<div class="a t" style="top:234.84px;font-size:12px;line-height:14px;color:#000;left:869px;width:300px;text-align:right;">166,400</div>
<svg class="a" style="left:1175px;top:232px" width="17" height="15" viewBox="0 0 17 15"><g fill="none" stroke="#8a8560" stroke-width="1">
<path d="M1.5 1 V3.5 H7.5 V1"/><rect x="1.5" y="5.5" width="6" height="6.5" fill="#ecebd8"/></g>
<path d="M5 10 L7.6 12.8 L14.6 3.8" fill="none" stroke="#0010ff" stroke-width="1.6"/></svg>
<div class="a" style="left:20px;top:252px;width:1178px;height:20px;background:#ffffff"></div>
<div class="a" style="left:789px;top:252px;width:277px;height:20px;background:#f9f9de"></div>
<div class="a" style="left:20px;top:272px;width:1178px;height:1px;background:#f0f0f0"></div>
<div class="a" style="left:0px;top:252px;width:19px;height:20px;background:#f0f0f0"></div>
<div class="a" style="left:0px;top:272px;width:19px;height:1px;background:#e2e2e2"></div>
<div class="a" style="left:19px;top:252px;width:1px;height:21px;background:#dcdcdc"></div>
<div class="a" style="left:92px;top:252px;width:1px;height:20px;background:#ececec"></div>
<div class="a" style="left:196px;top:252px;width:1px;height:20px;background:#ececec"></div>
<div class="a" style="left:575px;top:252px;width:1px;height:20px;background:#ececec"></div>
<div class="a" style="left:626px;top:252px;width:1px;height:20px;background:#ececec"></div>
<div class="a" style="left:682px;top:252px;width:1px;height:20px;background:#ececec"></div>
<div class="a" style="left:788px;top:252px;width:1px;height:20px;background:#ececec"></div>
<div class="a" style="left:854px;top:252px;width:1px;height:20px;background:#efeedd"></div>
<div class="a" style="left:960px;top:252px;width:1px;height:20px;background:#efeedd"></div>
<div class="a" style="left:1066px;top:252px;width:1px;height:20px;background:#ececec"></div>
<div class="a" style="left:1172px;top:252px;width:1px;height:20px;background:#ececec"></div>
<div class="a t" style="top:254.34px;font-size:12px;line-height:14px;color:#111;left:3px;">13</div>
<div class="a t" style="top:255.84px;font-size:12px;line-height:14px;color:#000;left:96px;">790583</div>
<div class="a t" style="top:255.84px;font-size:12px;line-height:14px;color:#000;left:200px;">ARDO BALKAN-MEXICO-MIX 2,5KG<span style="position:absolute;top:-1.84px;width:2px;height:7px;margin-left:7px;background:linear-gradient(#e00000 0,#e00000 2px,#c8c8c8 2px,#c8c8c8 3px,#8a8a8a 3px)"></span></div>
<div class="a t" style="top:255.84px;font-size:12px;line-height:14px;color:#000;left:324px;width:300px;text-align:right;">3</div>
<div class="a t" style="top:255.84px;font-size:12px;line-height:14px;color:#000;left:630px;">Original</div>
<div class="a t" style="top:255.84px;font-size:12px;line-height:14px;color:#000;left:486px;width:300px;text-align:right;">9,480</div>
<div class="a t" style="top:255.84px;font-size:12px;line-height:14px;color:#000;left:552px;width:300px;text-align:right;">3</div>
<div class="a t" style="top:255.84px;font-size:12px;line-height:14px;color:#000;left:858px;">Original</div>
<div class="a t" style="top:255.84px;font-size:12px;line-height:14px;color:#000;left:764px;width:300px;text-align:right;">9,480</div>
<div class="a t" style="top:255.84px;font-size:12px;line-height:14px;color:#000;left:869px;width:300px;text-align:right;">28,440</div>
<svg class="a" style="left:1175px;top:253px" width="17" height="15" viewBox="0 0 17 15"><g fill="none" stroke="#8a8560" stroke-width="1">
<path d="M1.5 1 V3.5 H7.5 V1"/><rect x="1.5" y="5.5" width="6" height="6.5" fill="#ecebd8"/></g>
<path d="M5 10 L7.6 12.8 L14.6 3.8" fill="none" stroke="#0010ff" stroke-width="1.6"/></svg>
<div class="a" style="left:20px;top:273px;width:1178px;height:20px;background:#eef8fe"></div>
<div class="a" style="left:789px;top:273px;width:277px;height:20px;background:#f5f2c8"></div>
<div class="a" style="left:20px;top:293px;width:1178px;height:1px;background:#f0f0f0"></div>
<div class="a" style="left:0px;top:273px;width:19px;height:20px;background:#f0f0f0"></div>
<div class="a" style="left:0px;top:293px;width:19px;height:1px;background:#e2e2e2"></div>
<div class="a" style="left:19px;top:273px;width:1px;height:21px;background:#dcdcdc"></div>
<div class="a" style="left:92px;top:273px;width:1px;height:20px;background:#ececec"></div>
<div class="a" style="left:196px;top:273px;width:1px;height:20px;background:#ececec"></div>
<div class="a" style="left:575px;top:273px;width:1px;height:20px;background:#ececec"></div>
<div class="a" style="left:626px;top:273px;width:1px;height:20px;background:#ececec"></div>
<div class="a" style="left:682px;top:273px;width:1px;height:20px;background:#ececec"></div>
<div class="a" style="left:788px;top:273px;width:1px;height:20px;background:#ececec"></div>
<div class="a" style="left:854px;top:273px;width:1px;height:20px;background:#efeedd"></div>
<div class="a" style="left:960px;top:273px;width:1px;height:20px;background:#efeedd"></div>
<div class="a" style="left:1066px;top:273px;width:1px;height:20px;background:#ececec"></div>
<div class="a" style="left:1172px;top:273px;width:1px;height:20px;background:#ececec"></div>
<div class="a t" style="top:275.34px;font-size:12px;line-height:14px;color:#111;left:3px;">14</div>
<div class="a t" style="top:276.84px;font-size:12px;line-height:14px;color:#000;left:96px;">790147</div>
<div class="a t" style="top:276.84px;font-size:12px;line-height:14px;color:#000;left:200px;">ARDO CHINAGEMUESE STANDAR2,5KG<span style="position:absolute;top:-1.84px;width:2px;height:7px;margin-left:7px;background:linear-gradient(#e00000 0,#e00000 2px,#c8c8c8 2px,#c8c8c8 3px,#8a8a8a 3px)"></span></div>
<div class="a t" style="top:276.84px;font-size:12px;line-height:14px;color:#000;left:324px;width:300px;text-align:right;">5</div>
<div class="a t" style="top:276.84px;font-size:12px;line-height:14px;color:#000;left:630px;">Original</div>
<div class="a t" style="top:276.84px;font-size:12px;line-height:14px;color:#000;left:486px;width:300px;text-align:right;">15,720</div>
<div class="a t" style="top:276.84px;font-size:12px;line-height:14px;color:#000;left:552px;width:300px;text-align:right;">5</div>
<div class="a t" style="top:276.84px;font-size:12px;line-height:14px;color:#000;left:858px;">Original</div>
<div class="a t" style="top:276.84px;font-size:12px;line-height:14px;color:#000;left:764px;width:300px;text-align:right;">15,720</div>
<div class="a t" style="top:276.84px;font-size:12px;line-height:14px;color:#000;left:869px;width:300px;text-align:right;">78,600</div>
<svg class="a" style="left:1175px;top:274px" width="17" height="15" viewBox="0 0 17 15"><g fill="none" stroke="#8a8560" stroke-width="1">
<path d="M1.5 1 V3.5 H7.5 V1"/><rect x="1.5" y="5.5" width="6" height="6.5" fill="#ecebd8"/></g>
<path d="M5 10 L7.6 12.8 L14.6 3.8" fill="none" stroke="#0010ff" stroke-width="1.6"/></svg>
<div class="a" style="left:20px;top:294px;width:1178px;height:20px;background:#ffffff"></div>
<div class="a" style="left:789px;top:294px;width:277px;height:20px;background:#f9f9de"></div>
<div class="a" style="left:20px;top:314px;width:1178px;height:1px;background:#f0f0f0"></div>
<div class="a" style="left:0px;top:294px;width:19px;height:20px;background:#f0f0f0"></div>
<div class="a" style="left:0px;top:314px;width:19px;height:1px;background:#e2e2e2"></div>
<div class="a" style="left:19px;top:294px;width:1px;height:21px;background:#dcdcdc"></div>
<div class="a" style="left:92px;top:294px;width:1px;height:20px;background:#ececec"></div>
<div class="a" style="left:196px;top:294px;width:1px;height:20px;background:#ececec"></div>
<div class="a" style="left:575px;top:294px;width:1px;height:20px;background:#ececec"></div>
<div class="a" style="left:626px;top:294px;width:1px;height:20px;background:#ececec"></div>
<div class="a" style="left:682px;top:294px;width:1px;height:20px;background:#ececec"></div>
<div class="a" style="left:788px;top:294px;width:1px;height:20px;background:#ececec"></div>
<div class="a" style="left:854px;top:294px;width:1px;height:20px;background:#efeedd"></div>
<div class="a" style="left:960px;top:294px;width:1px;height:20px;background:#efeedd"></div>
<div class="a" style="left:1066px;top:294px;width:1px;height:20px;background:#ececec"></div>
<div class="a" style="left:1172px;top:294px;width:1px;height:20px;background:#ececec"></div>
<div class="a t" style="top:296.34px;font-size:12px;line-height:14px;color:#111;left:3px;">15</div>
<div class="a t" style="top:297.84px;font-size:12px;line-height:14px;color:#000;left:96px;">790605</div>
<div class="a t" style="top:297.84px;font-size:12px;line-height:14px;color:#000;left:200px;">ARDO KAISERGEMUESE 2,5 KG<span style="position:absolute;top:-1.84px;width:2px;height:7px;margin-left:7px;background:linear-gradient(#e00000 0,#e00000 2px,#c8c8c8 2px,#c8c8c8 3px,#8a8a8a 3px)"></span></div>
<div class="a t" style="top:297.84px;font-size:12px;line-height:14px;color:#000;left:324px;width:300px;text-align:right;">4</div>
<div class="a t" style="top:297.84px;font-size:12px;line-height:14px;color:#000;left:630px;">Original</div>
<div class="a t" style="top:297.84px;font-size:12px;line-height:14px;color:#000;left:486px;width:300px;text-align:right;">12,880</div>
<div class="a t" style="top:297.84px;font-size:12px;line-height:14px;color:#000;left:552px;width:300px;text-align:right;">4</div>
<div class="a t" style="top:297.84px;font-size:12px;line-height:14px;color:#000;left:858px;">Original</div>
<div class="a t" style="top:297.84px;font-size:12px;line-height:14px;color:#000;left:764px;width:300px;text-align:right;">12,880</div>
<div class="a t" style="top:297.84px;font-size:12px;line-height:14px;color:#000;left:869px;width:300px;text-align:right;">51,520</div>
<svg class="a" style="left:1175px;top:295px" width="17" height="15" viewBox="0 0 17 15"><g fill="none" stroke="#8a8560" stroke-width="1">
<path d="M1.5 1 V3.5 H7.5 V1"/><rect x="1.5" y="5.5" width="6" height="6.5" fill="#ecebd8"/></g>
<path d="M5 10 L7.6 12.8 L14.6 3.8" fill="none" stroke="#0010ff" stroke-width="1.6"/></svg>
<div class="a" style="left:20px;top:315px;width:1178px;height:20px;background:#eef8fe"></div>
<div class="a" style="left:789px;top:315px;width:277px;height:20px;background:#f5f2c8"></div>
<div class="a" style="left:20px;top:335px;width:1178px;height:1px;background:#f0f0f0"></div>
<div class="a" style="left:0px;top:315px;width:19px;height:20px;background:#f0f0f0"></div>
<div class="a" style="left:0px;top:335px;width:19px;height:1px;background:#e2e2e2"></div>
<div class="a" style="left:19px;top:315px;width:1px;height:21px;background:#dcdcdc"></div>
<div class="a" style="left:92px;top:315px;width:1px;height:20px;background:#ececec"></div>
<div class="a" style="left:196px;top:315px;width:1px;height:20px;background:#ececec"></div>
<div class="a" style="left:575px;top:315px;width:1px;height:20px;background:#ececec"></div>
<div class="a" style="left:626px;top:315px;width:1px;height:20px;background:#ececec"></div>
<div class="a" style="left:682px;top:315px;width:1px;height:20px;background:#ececec"></div>
<div class="a" style="left:788px;top:315px;width:1px;height:20px;background:#ececec"></div>
<div class="a" style="left:854px;top:315px;width:1px;height:20px;background:#efeedd"></div>
<div class="a" style="left:960px;top:315px;width:1px;height:20px;background:#efeedd"></div>
<div class="a" style="left:1066px;top:315px;width:1px;height:20px;background:#ececec"></div>
<div class="a" style="left:1172px;top:315px;width:1px;height:20px;background:#ececec"></div>
<div class="a t" style="top:317.34px;font-size:12px;line-height:14px;color:#111;left:3px;">16</div>
<div class="a t" style="top:318.84px;font-size:12px;line-height:14px;color:#000;left:96px;">792274</div>
<div class="a t" style="top:318.84px;font-size:12px;line-height:14px;color:#000;left:200px;">MIBELL FESTTAGSROLLE 1000ML</div>
<div class="a t" style="top:318.84px;font-size:12px;line-height:14px;color:#000;left:324px;width:300px;text-align:right;">5</div>
<div class="a t" style="top:318.84px;font-size:12px;line-height:14px;color:#000;left:630px;">Original</div>
<div class="a t" style="top:318.84px;font-size:12px;line-height:14px;color:#000;left:486px;width:300px;text-align:right;">4,860</div>
<div class="a t" style="top:318.84px;font-size:12px;line-height:14px;color:#000;left:552px;width:300px;text-align:right;">5</div>
<div class="a t" style="top:318.84px;font-size:12px;line-height:14px;color:#000;left:858px;">Original</div>
<div class="a t" style="top:318.84px;font-size:12px;line-height:14px;color:#000;left:764px;width:300px;text-align:right;">4,860</div>
<div class="a t" style="top:318.84px;font-size:12px;line-height:14px;color:#000;left:869px;width:300px;text-align:right;">24,300</div>
<svg class="a" style="left:190px;top:316px" width="7" height="7" viewBox="0 0 7 7"><path d="M0 0 H7 V7 Z" fill="#e2cf62"/><path d="M0 0 H7" stroke="#a89540" stroke-width="1"/></svg>
<svg class="a" style="left:1175px;top:316px" width="17" height="15" viewBox="0 0 17 15"><g fill="none" stroke="#8a8560" stroke-width="1">
<path d="M1.5 1 V3.5 H7.5 V1"/><rect x="1.5" y="5.5" width="6" height="6.5" fill="#ecebd8"/></g>
<path d="M5 10 L7.6 12.8 L14.6 3.8" fill="none" stroke="#0010ff" stroke-width="1.6"/></svg>
<div class="a" style="left:20px;top:336px;width:1178px;height:20px;background:#ffffff"></div>
<div class="a" style="left:789px;top:336px;width:277px;height:20px;background:#f9f9de"></div>
<div class="a" style="left:20px;top:356px;width:1178px;height:1px;background:#f0f0f0"></div>
<div class="a" style="left:0px;top:336px;width:19px;height:20px;background:#f0f0f0"></div>
<div class="a" style="left:0px;top:356px;width:19px;height:1px;background:#e2e2e2"></div>
<div class="a" style="left:19px;top:336px;width:1px;height:21px;background:#dcdcdc"></div>
<div class="a" style="left:92px;top:336px;width:1px;height:20px;background:#ececec"></div>
<div class="a" style="left:196px;top:336px;width:1px;height:20px;background:#ececec"></div>
<div class="a" style="left:575px;top:336px;width:1px;height:20px;background:#ececec"></div>
<div class="a" style="left:626px;top:336px;width:1px;height:20px;background:#ececec"></div>
<div class="a" style="left:682px;top:336px;width:1px;height:20px;background:#ececec"></div>
<div class="a" style="left:788px;top:336px;width:1px;height:20px;background:#ececec"></div>
<div class="a" style="left:854px;top:336px;width:1px;height:20px;background:#efeedd"></div>
<div class="a" style="left:960px;top:336px;width:1px;height:20px;background:#efeedd"></div>
<div class="a" style="left:1066px;top:336px;width:1px;height:20px;background:#ececec"></div>
<div class="a" style="left:1172px;top:336px;width:1px;height:20px;background:#ececec"></div>
<div class="a t" style="top:338.34px;font-size:12px;line-height:14px;color:#111;left:3px;">17</div>
<div class="a t" style="top:339.84px;font-size:12px;line-height:14px;color:#000;left:96px;">790035</div>
<div class="a t" style="top:339.84px;font-size:12px;line-height:14px;color:#000;left:200px;">BECR SACHERTORTE 1450 G 100</div>
<div class="a t" style="top:339.84px;font-size:12px;line-height:14px;color:#000;left:324px;width:300px;text-align:right;">1</div>
<div class="a t" style="top:339.84px;font-size:12px;line-height:14px;color:#000;left:630px;">Original</div>
<div class="a t" style="top:339.84px;font-size:12px;line-height:14px;color:#000;left:486px;width:300px;text-align:right;">43,600</div>
<div class="a t" style="top:339.84px;font-size:12px;line-height:14px;color:#000;left:552px;width:300px;text-align:right;">1</div>
<div class="a t" style="top:339.84px;font-size:12px;line-height:14px;color:#000;left:858px;">Original</div>
<div class="a t" style="top:339.84px;font-size:12px;line-height:14px;color:#000;left:764px;width:300px;text-align:right;">43,600</div>
<div class="a t" style="top:339.84px;font-size:12px;line-height:14px;color:#000;left:869px;width:300px;text-align:right;">43,600</div>
<svg class="a" style="left:190px;top:337px" width="7" height="7" viewBox="0 0 7 7"><path d="M0 0 H7 V7 Z" fill="#e2cf62"/><path d="M0 0 H7" stroke="#a89540" stroke-width="1"/></svg>
<svg class="a" style="left:1175px;top:337px" width="17" height="15" viewBox="0 0 17 15"><g fill="none" stroke="#8a8560" stroke-width="1">
<path d="M1.5 1 V3.5 H7.5 V1"/><rect x="1.5" y="5.5" width="6" height="6.5" fill="#ecebd8"/></g>
<path d="M5 10 L7.6 12.8 L14.6 3.8" fill="none" stroke="#0010ff" stroke-width="1.6"/></svg>
</div>
<div class="a" style="left:1265px;top:150px;width:16px;height:368px;background:#f0f0f0;"></div>
<div class="a" style="left:1265px;top:167px;width:15px;height:270px;background:#cdcdcd;"></div>
<svg class="a" style="left:1268px;top:155px" width="10" height="8" viewBox="0 0 10 8"><path d="M1.5 6 L5 2.5 L8.5 6" fill="none" stroke="#606060" stroke-width="1.6"/></svg>
<svg class="a" style="left:1268px;top:506px" width="10" height="8" viewBox="0 0 10 8"><path d="M1.5 2 L5 5.5 L8.5 2" fill="none" stroke="#606060" stroke-width="1.6"/></svg>
<div class="a t" style="top:524.31px;font-size:9.2px;line-height:11px;color:#0c2a5c;letter-spacing:0.7px;left:110px;-webkit-text-stroke:0.15px #0c2a5c;">18 Belegpositionen</div>
<div class="a t" style="top:522.53px;font-size:10px;line-height:12px;color:#e00000;letter-spacing:0.2px;left:305.5px;">KdNr. 12345</div>
<div class="a" style="left:425px;top:519px;width:739px;height:16px;background:#f0f0f0;"></div>
<svg class="a" style="left:429px;top:522px" width="8" height="10" viewBox="0 0 8 10"><path d="M6 1.5 L2.5 5 L6 8.5" fill="none" stroke="#c2c2c2" stroke-width="1.6"/></svg>
<svg class="a" style="left:1152px;top:522px" width="8" height="10" viewBox="0 0 8 10"><path d="M2 1.5 L5.5 5 L2 8.5" fill="none" stroke="#c2c2c2" stroke-width="1.6"/></svg>
<div class="a t" style="top:521.19px;font-size:11px;line-height:13px;color:#b4b4b4;letter-spacing:0.2px;left:1175.5px;">netto</div>
<div class="a t" style="top:521.19px;font-size:11px;line-height:13px;color:#b4b4b4;letter-spacing:0.2px;left:1223.5px;">brutto</div>
<div class="a" style="left:65px;top:539px;width:1213px;height:26px;border:1px solid #b9b9b9;"></div>
<div class="a t" style="top:547.24px;font-size:12px;line-height:14px;color:#111;letter-spacing:0.35px;left:1032.5px;">Gesamtsumme:</div>
<div class="a t" style="top:547.04px;font-size:12px;line-height:14px;color:#1a3a6a;letter-spacing:0.05px;right:32px;text-align:right;">1.295,480 EUR</div>
<div class="a" style="left:69px;top:574px;width:361px;height:18px;border:1px solid #adadad;background:#e1e1e1;"></div>
<div class="a t" style="top:576.84px;font-size:12px;line-height:14px;color:#000;letter-spacing:0.14px;left:72px;">Artikelpass und weitere Produktinfos</div>
<svg class="a" style="left:417px;top:581px" width="11" height="9" viewBox="0 0 11 9"><path d="M1.3 2.8 L5.3 6.8 L9.3 2.8" fill="none" stroke="#333" stroke-width="1.05"/></svg>
<div class="a t" style="top:574.34px;font-size:12px;line-height:14px;color:#b0b0b0;letter-spacing:0.35px;left:1086px;text-decoration:underline;">News (0)</div>
<div class="a t" style="top:574.34px;font-size:12px;line-height:14px;color:#e00000;left:1146px;">|</div>
<div class="a t" style="top:574.34px;font-size:12px;line-height:14px;color:#e00000;letter-spacing:0.1px;left:1155px;text-decoration:underline;">Favoriten</div>
<svg class="a" style="left:1221px;top:577px" width="14" height="13" viewBox="0 0 14 13"><defs><linearGradient id="ga" x1="0" y1="0" x2="0" y2="1"><stop offset="0" stop-color="#fff"/><stop offset="1" stop-color="#d8d8b8"/></linearGradient></defs><path d="M1.2 6.5 L6 1.3 V4 H12.5 V8.8 H6 V11.8 Z" fill="url(#ga)" stroke="#4a4a4a" stroke-width="1"/></svg>
<svg class="a" style="left:1239px;top:577px" width="14" height="13" viewBox="0 0 14 13"><path d="M12.8 6.5 L8 1.3 V4 H1.5 V8.8 H8 V11.8 Z" fill="url(#ga)" stroke="#4a4a4a" stroke-width="1"/></svg>
<svg class="a" style="left:1264px;top:577px" width="12" height="13" viewBox="0 0 12 13"><path d="M2 11.5 L10.2 1.8" stroke="#f00000" stroke-width="2.2"/><path d="M2.5 4 L10 10.8" stroke="#f00000" stroke-width="2"/></svg>
<div class="a" style="left:69px;top:597px;width:1206px;height:140px;border:1px solid #828790;background:#fff;"></div>
<div class="a" style="left:202px;top:603px;width:1051px;height:21px;background:#e3edf9;"></div>
<div class="a t" style="left:204.6px;top:607.14px;font-size:12px;line-height:14px;color:#16336e;transform:scaleX(1.2);transform-origin:0 0;font-weight:700;">762249 - BOE KAESESCHE BUTTERK 45% 150G <span style="font-weight:400;color:#e00000;text-decoration:underline;">(Eigenschaften...)</span></div>
<div class="a" style="left:94px;top:622px;width:83px;height:83px;border-radius:50%;background:#ebebeb;"></div>
<svg class="a" style="left:110px;top:636px" width="54" height="54" viewBox="0 0 54 54">
<rect x="10" y="3" width="39" height="44" fill="#9b9b9b"/><rect x="12" y="5" width="35" height="35" fill="#ececec"/>
<rect x="3" y="8" width="39" height="44" fill="#9b9b9b"/><rect x="5" y="10" width="35" height="34" fill="#ececec"/>
</svg>
<div class="a t" style="left:208px;top:633.84px;font-size:12px;line-height:14px;color:#7f7f7f;transform:scaleX(1.19);transform-origin:0 0;">Kostenstelle</div>
<div class="a t" style="left:208px;top:649.84px;font-size:12px;line-height:14px;color:#1f4f9c;transform:scaleX(1.155);transform-origin:0 0;">Cafeteria KB (Cafeteria KB)</div>
<div class="a" style="left:447px;top:628px;width:1px;height:39px;background:#5470a8;"></div>
<div class="a t" style="left:524.4px;top:633.84px;font-size:12px;line-height:14px;color:#7f7f7f;transform:scaleX(1.0);transform-origin:0 0;">HACCP</div>
<div class="a t" style="left:524.4px;top:649.84px;font-size:12px;line-height:14px;color:#1f4f9c;transform:scaleX(1.15);transform-origin:0 0;">Erfüllt</div>
<div class="a" style="left:636px;top:628px;width:1px;height:39px;background:#5470a8;"></div>
<div class="a t" style="left:204.6px;top:689.84px;font-size:12px;line-height:14px;color:#16336e;transform:scaleX(1.15);transform-origin:0 0;"><b style="color:#16336e">Hinweis:</b> Der Wert für <b style="color:#16336e">Buchungskonto</b> fehlt.</div>
<div class="a t" style="right:48.40000000000009px;top:631.84px;font-size:12px;line-height:14px;color:#1f4f9c;transform:scaleX(1.19);transform-origin:100% 0;text-align:right;">» Positionsinfo</div>
<div class="a t" style="right:48.40000000000009px;top:653.84px;font-size:12px;line-height:14px;color:#e00000;transform:scaleX(1.19);transform-origin:100% 0;text-align:right;text-decoration:underline;">Bestellinfo</div>
<div class="a t" style="right:48.40000000000009px;top:675.84px;font-size:12px;line-height:14px;color:#e00000;transform:scaleX(1.19);transform-origin:100% 0;text-align:right;text-decoration:underline;">Herstellerinfo</div>
<div class="a t" style="right:48.40000000000009px;top:697.34px;font-size:12px;line-height:14px;color:#e00000;transform:scaleX(1.19);transform-origin:100% 0;text-align:right;text-decoration:underline;">Nährwerte</div>
<div class="a t" style="right:48.40000000000009px;top:719.34px;font-size:12px;line-height:14px;color:#e00000;transform:scaleX(1.19);transform-origin:100% 0;text-align:right;text-decoration:underline;">Allergene</div>
<div class="a" style="left:1260px;top:598px;width:16px;height:139px;background:#f0f0f0;"></div>
<div class="a" style="left:1260px;top:614px;width:16px;height:89px;background:#cdcdcd;"></div>
<svg class="a" style="left:1263px;top:603px" width="10" height="8" viewBox="0 0 10 8"><path d="M1.5 6 L5 2.5 L8.5 6" fill="none" stroke="#505050" stroke-width="1.4"/></svg>
<svg class="a" style="left:1263px;top:725px" width="10" height="8" viewBox="0 0 10 8"><path d="M1.5 2 L5 5.5 L8.5 2" fill="none" stroke="#505050" stroke-width="1.4"/></svg>
<div class="a" style="left:66px;top:749px;width:127px;height:26px;border:1px solid #adadad;background:#e1e1e1;"></div>
<svg class="a" style="left:90px;top:755px" width="14" height="14" viewBox="0 0 14 14"><defs><radialGradient id="gi" cx="0.5" cy="0.45" r="0.6"><stop offset="0" stop-color="#3b80c0"/><stop offset="1" stop-color="#0d4a8c"/></radialGradient></defs><circle cx="7" cy="7" r="7" fill="url(#gi)"/><path d="M5.7 2.3 H8.3 L7.8 9 H6.2 Z" fill="#fff"/><circle cx="7" cy="11" r="1.2" fill="#fff"/></svg>
<div class="a t" style="top:755.84px;font-size:12px;line-height:14px;color:#000;left:109.3px;">Produktinfo</div>
<div class="a" style="left:197px;top:749px;width:146px;height:26px;border:1px solid #adadad;background:#e1e1e1;"></div>
<svg class="a" style="left:223px;top:754.5px" width="15" height="15" viewBox="0 0 15 15"><defs><linearGradient id="gr" x1="0" y1="0" x2="0" y2="1"><stop offset="0" stop-color="#8a7010"/><stop offset="1" stop-color="#d85a10"/></linearGradient><linearGradient id="gs" x1="0.2" y1="0" x2="0.6" y2="1"><stop offset="0" stop-color="#f2c21c"/><stop offset="1" stop-color="#e8720e"/></linearGradient></defs><path d="M7.50 0.30 L8.53 2.30 L10.26 0.85 L10.44 3.09 L12.59 2.41 L11.91 4.56 L14.15 4.74 L12.70 6.47 L14.70 7.50 L12.70 8.53 L14.15 10.26 L11.91 10.44 L12.59 12.59 L10.44 11.91 L10.26 14.15 L8.53 12.70 L7.50 14.70 L6.47 12.70 L4.74 14.15 L4.56 11.91 L2.41 12.59 L3.09 10.44 L0.85 10.26 L2.30 8.53 L0.30 7.50 L2.30 6.47 L0.85 4.74 L3.09 4.56 L2.41 2.41 L4.56 3.09 L4.74 0.85 L6.47 2.30 Z" fill="url(#gr)"/><circle cx="7.5" cy="7.5" r="5.4" fill="url(#gs)"/></svg>
<div class="a t" style="top:755.84px;font-size:12px;line-height:14px;color:#000;left:243.4px;">Aktionsdetails</div>
<div class="a" style="left:347px;top:749px;width:134px;height:26px;border:1px solid #adadad;background:#e1e1e1;"></div>
<svg class="a" style="left:373px;top:753px" width="15" height="17" viewBox="0 0 15 17"><g fill="none" stroke-linecap="butt"><path d="M4.5 4 H10" stroke="#0f4a80" stroke-width="2.4"/><path d="M9.8 4 Q12.8 4.2 12.8 8.2" stroke="#3c6f9c" stroke-width="1.3"/><path d="M10 12.5 H4.8" stroke="#1d609e" stroke-width="3"/><path d="M5 12.6 Q1.8 12.4 1.8 8.2" stroke="#3c6f9c" stroke-width="1.3"/></g><path d="M1 4 L5.2 0.8 V7.2 Z" fill="#185996"/><path d="M14 12.5 L9.6 9.6 V15.8 Z" fill="#1f64a3"/></svg>
<div class="a t" style="top:755.84px;font-size:12px;line-height:14px;color:#000;left:392px;">Lieferartikel</div>
<div class="a" style="left:484px;top:749px;width:128px;height:26px;border:1px solid #adadad;background:#e1e1e1;"></div>
<div class="a" style="left:526px;top:755px;width:4px;height:4px;background:#d80000"></div><div class="a" style="left:526px;top:760px;width:4px;height:9px;background:#7c7c7c"></div>
<div class="a t" style="top:755.84px;font-size:12px;line-height:14px;color:#000;left:540px;">PRiNS</div>
<div class="a" style="left:936px;top:749px;width:114px;height:26px;border:1px solid #adadad;background:#e1e1e1;"></div>
<div class="a t" style="top:755.84px;font-size:12px;line-height:14px;color:#000;left:971.5px;">Drucken</div>
<div class="a" style="left:1057px;top:749px;width:221px;height:26px;border:1px solid #adadad;background:#e1e1e1;"></div>
<div class="a t" style="top:755.84px;font-size:12px;line-height:14px;color:#000;font-weight:700;left:1116px;">Beleg abschließen</div>
<div class="a" style="left:50px;top:792px;width:1247px;height:29px;background:#f0f0f0;"></div>
<div class="a" style="left:0px;top:0px;width:1298px;height:1px;background:#646464;"></div>
<div class="a" style="left:0px;top:0px;width:1px;height:823px;background:#646464;"></div>
<div class="a" style="left:1297px;top:0px;width:1px;height:823px;background:#646464;"></div>
<div class="a" style="left:0px;top:822px;width:1298px;height:1px;background:#646464;"></div>
</body></html>
